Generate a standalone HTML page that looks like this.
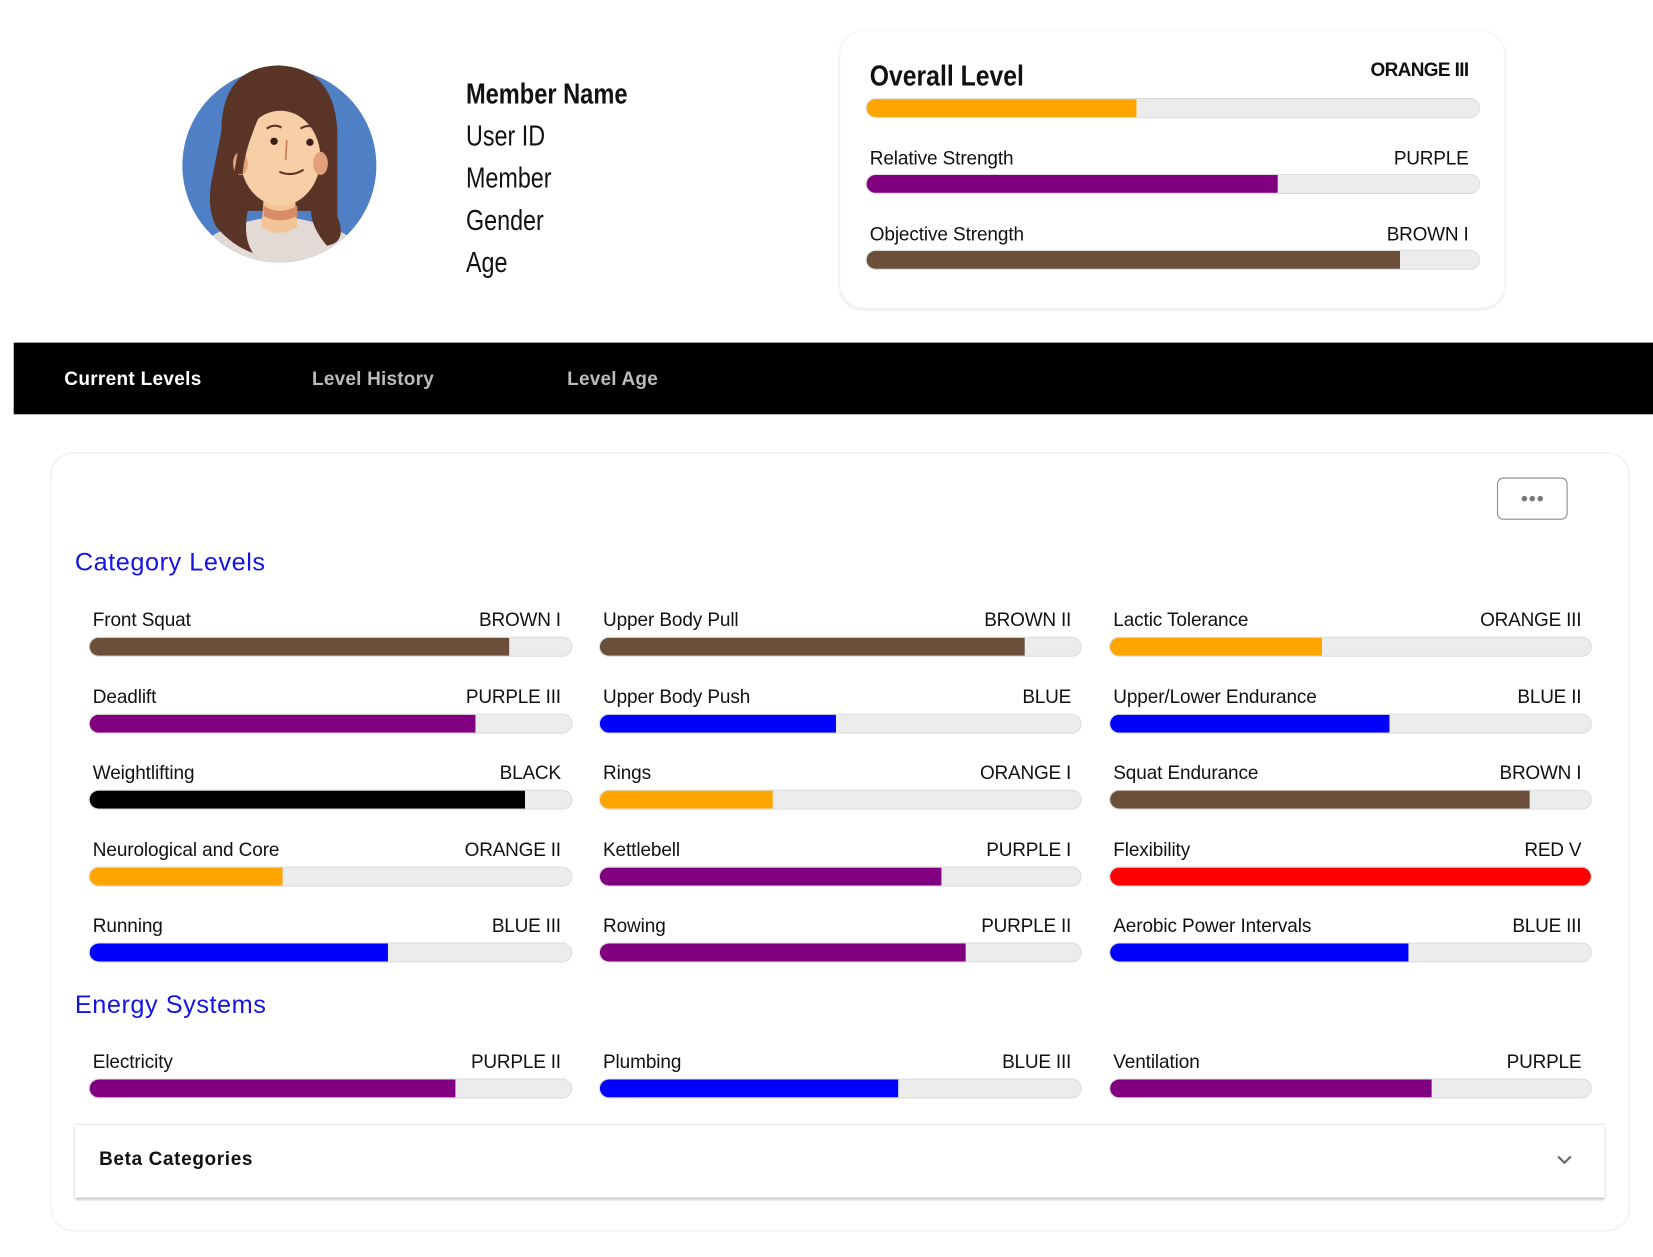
<!DOCTYPE html>
<html><head><meta charset="utf-8"><style>
html,body{margin:0;padding:0;background:#fff;overflow:hidden;width:1653px;height:1257px}
#w{position:absolute;left:0;top:0;width:1568px;height:1192px;transform:scale(1.05421);transform-origin:0 0;font-family:"Liberation Sans",sans-serif;color:#111}
.a{position:absolute;white-space:nowrap}
.cond{font-family:"Liberation Sans Narrow","Liberation Sans",sans-serif;transform-origin:0 50%}
.track{position:absolute;height:18px;background:#ececec;border:1px solid #ddd;border-radius:10px;overflow:hidden;box-sizing:border-box}
.fill{position:absolute;left:0;top:0;bottom:0;border-radius:10px 0 0 10px}
.lab{position:absolute;font-size:18px;line-height:20px;color:#111;letter-spacing:-.1px}
.val{position:absolute;font-size:18px;line-height:20px;color:#111;text-align:right;letter-spacing:-.2px}
</style></head><body><div id="w">

<svg class="a" style="left:170px;top:55px" width="220" height="220" viewBox="0 0 220 220">
<defs><clipPath id="c"><circle cx="95" cy="102" r="92"/></clipPath></defs>
<circle cx="95" cy="102" r="92" fill="#4f7fc4"/>
<g clip-path="url(#c)">
<path d="M5 200 Q20 158 95 150 Q170 158 190 200 L190 220 L5 220Z" fill="#e4dad5"/>
</g>
<path d="M40 70 Q40 8 95 7 Q150 10 150 75 L150 150 Q160 175 140 178 Q125 160 125 145 L65 145 Q60 170 70 185 Q50 178 35 160 Q25 140 32 110Z" fill="#5a3527"/>
<path d="M80 135 L110 135 L112 160 Q95 172 78 160Z" fill="#f4c499"/>
<path d="M80 140 Q95 150 112 140 L112 150 Q95 158 80 150Z" fill="#d98c66"/>
<ellipse cx="96" cy="95" rx="38" ry="45" fill="#f7cfa6"/>
<ellipse cx="58" cy="100" rx="7" ry="11" fill="#e2a07b"/>
<ellipse cx="134" cy="100" rx="7" ry="11" fill="#e2a07b"/>
<path d="M58 75 Q70 30 100 32 Q80 40 70 70 Q62 90 60 110 L52 110Z" fill="#5a3527"/>
<path d="M100 32 Q130 32 138 80 L134 60 Q120 40 100 32Z" fill="#5a3527"/>
<circle cx="90" cy="79" r="3.5" fill="#3a1f15"/><circle cx="124" cy="80" r="3.5" fill="#3a1f15"/>
<path d="M83 67 Q90 62 97 66 M115 67 Q123 62 130 67" stroke="#5a3527" stroke-width="2" fill="none"/>
<path d="M102 78 L101 97" stroke="#c97a5a" stroke-width="1.6" fill="none"/>
<path d="M95 108 Q107 113 118 106" stroke="#5a3527" stroke-width="2" fill="none"/>
</svg>

<div class="a cond" style="left:442px;top:74px;font-size:27px;font-weight:bold;transform:scaleX(.83)">Member Name</div>
<div class="a cond" style="left:442px;top:114px;font-size:27px;transform:scaleX(.82)">User ID</div>
<div class="a cond" style="left:442px;top:154px;font-size:27px;transform:scaleX(.82)">Member</div>
<div class="a cond" style="left:442px;top:194px;font-size:27px;transform:scaleX(.82)">Gender</div>
<div class="a cond" style="left:442px;top:234px;font-size:27px;transform:scaleX(.82)">Age</div>

<div class="a" style="left:797px;top:30px;width:630px;height:262px;border-radius:22px;box-shadow:0 1px 4px rgba(0,0,0,.12);background:#fff"></div>
<div class="a cond" style="left:825px;top:57px;font-size:27px;font-weight:bold;transform:scaleX(.87)">Overall Level</div>
<div class="a" style="left:1200px;width:193px;text-align:right;top:56px;font-size:18px;font-weight:bold;letter-spacing:-.6px">ORANGE III</div>
<div class="track" style="left:821px;top:93px;width:583px;height:19px"><div class="fill" style="width:256px;background:#ffa500"></div></div>
<div class="lab" style="left:825px;top:140px">Relative Strength</div>
<div class="val" style="left:1200px;width:193px;top:140px">PURPLE</div>
<div class="track" style="left:821px;top:165px;width:583px;height:19px"><div class="fill" style="width:390px;background:#800080"></div></div>
<div class="lab" style="left:825px;top:212px">Objective Strength</div>
<div class="val" style="left:1200px;width:193px;top:212px">BROWN I</div>
<div class="track" style="left:821px;top:237px;width:583px;height:19px"><div class="fill" style="width:506px;background:#6b4f3a"></div></div>

<div class="a" style="left:13px;top:325px;width:1555px;height:68px;background:#000"></div>
<div class="a" style="left:61px;top:349px;font-size:18px;font-weight:bold;color:#fff;letter-spacing:.3px">Current Levels</div>
<div class="a" style="left:296px;top:349px;font-size:18px;font-weight:bold;color:#bbb;letter-spacing:.2px">Level History</div>
<div class="a" style="left:538px;top:349px;font-size:18px;font-weight:bold;color:#bbb;letter-spacing:.2px">Level Age</div>

<div class="a" style="left:48px;top:429px;width:1498px;height:739px;border:1px solid #eee;border-radius:22px;box-sizing:border-box"></div>
<div class="a" style="left:1420px;top:453px;width:67px;height:40px;border:1.5px solid #888;border-radius:6px;box-sizing:border-box"></div>
<svg class="a" style="left:1420px;top:453px" width="67" height="40"><circle cx="26" cy="20" r="2.6" fill="#777"/><circle cx="33.5" cy="20" r="2.6" fill="#777"/><circle cx="41" cy="20" r="2.6" fill="#777"/></svg>

<div class="a" style="left:71px;top:520px;font-size:24px;color:#1414e6;letter-spacing:.5px">Category Levels</div>
<div class="a" style="left:71px;top:940px;font-size:24px;color:#1414e6;letter-spacing:.5px">Energy Systems</div>

<div id="rows"></div>

<div class="a" style="left:71px;top:1066px;width:1451px;height:69px;border-top:1px solid #e6e6e6;box-shadow:0 2px 3px rgba(0,0,0,.3);background:#fff"></div>
<div class="a" style="left:94px;top:1089px;font-size:18px;font-weight:bold;letter-spacing:.6px">Beta Categories</div>
<svg class="a" style="left:1475px;top:1094px" width="18" height="12" viewBox="0 0 18 12"><path d="M3 3 L9 9 L15 3" stroke="#666" stroke-width="2" fill="none"/></svg>

<script>
var cols=[[84,88,532,543],[568,572,1016,1026],[1052,1056,1500,1510]];
var C={br:"#6b4f3a",pu:"#800080",bk:"#000",or:"#ffa500",bl:"#0000ff",rd:"#ff0000"};
var d=[
[588,[["Front Squat","BROWN I",482,"br"],["Upper Body Pull","BROWN II",971,"br"],["Lactic Tolerance","ORANGE III",1253,"or"]]],
[661,[["Deadlift","PURPLE III",450,"pu"],["Upper Body Push","BLUE",792,"bl"],["Upper/Lower Endurance","BLUE II",1317,"bl"]]],
[733,[["Weightlifting","BLACK",497,"bk"],["Rings","ORANGE I",732,"or"],["Squat Endurance","BROWN I",1450,"br"]]],
[806,[["Neurological and Core","ORANGE II",267,"or"],["Kettlebell","PURPLE I",892,"pu"],["Flexibility","RED V",1510,"rd"]]],
[878,[["Running","BLUE III",367,"bl"],["Rowing","PURPLE II",915,"pu"],["Aerobic Power Intervals","BLUE III",1335,"bl"]]],
[1007,[["Electricity","PURPLE II",431,"pu"],["Plumbing","BLUE III",851,"bl"],["Ventilation","PURPLE",1357,"pu"]]]];
var h="";
d.forEach(function(r){var y=r[0];r[1].forEach(function(it,i){var c=cols[i];
h+='<div class="lab" style="left:'+c[1]+'px;top:'+(y-10)+'px">'+it[0]+'</div>';
h+='<div class="val" style="left:'+(c[2]-200)+'px;width:200px;top:'+(y-10)+'px">'+it[1]+'</div>';
h+='<div class="track" style="left:'+c[0]+'px;top:'+(y+16)+'px;width:'+(c[3]-c[0])+'px;height:19px"><div class="fill" style="width:'+(it[2]-c[0])+'px;background:'+C[it[3]]+(it[2]>=c[3]?';border-radius:10px':'')+'"></div></div>';
});});
document.getElementById("rows").innerHTML=h;
</script>
</div></body></html>
